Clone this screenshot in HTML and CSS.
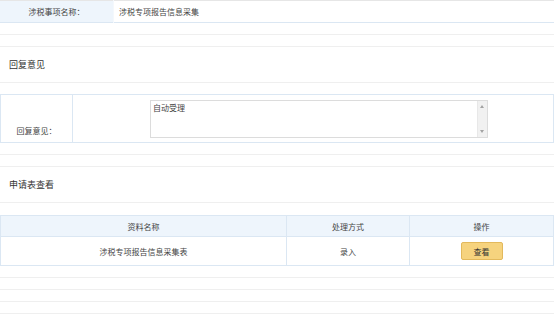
FILE: index.html
```html
<!DOCTYPE html>
<html lang="zh-CN">
<head>
    <meta charset="UTF-8">
    <title>涉税事项</title>
    <link rel="stylesheet" href="styles.css">
</head>
<body>
    <table class="info-table">
        <tr>
            <td class="label">涉税事项名称：</td>
            <td class="value">涉税专项报告信息采集</td>
        </tr>
    </table>
    <div class="gap"></div>
    <div class="gap"></div>
    <div class="section-title">回复意见</div>
    <table class="reply-table">
        <tr>
            <td class="reply-label">回复意见：</td>
            <td class="reply-value">
                <div class="textbox">
                    <div class="textbox-text">自动受理</div>
                    <div class="scrollbar">
                        <span class="arrow-up"></span>
                        <span class="arrow-down"></span>
                    </div>
                </div>
            </td>
        </tr>
    </table>
    <div class="gap"></div>
    <div class="gap"></div>
    <div class="section-title">申请表查看</div>
    <table class="data-table">
        <tr>
            <th class="col-name">资料名称</th>
            <th class="col-mode">处理方式</th>
            <th>操作</th>
        </tr>
        <tr>
            <td>涉税专项报告信息采集表</td>
            <td>录入</td>
            <td><button class="view-btn">查看</button></td>
        </tr>
    </table>
    <div class="gap"></div>
    <div class="gap"></div>
    <div class="gap"></div>
    <div class="gap"></div>
</body>
</html>
```

FILE: styles.css
```css
body {
    margin: 0;
    font-family: "Noto Sans CJK SC", "Liberation Sans", sans-serif;
    font-size: 8px;
    color: #444444;
    background: #ffffff;
}
table {
    width: 100%;
    border-collapse: collapse;
}
td, th {
    padding: 0;
}
.info-table {
    border-top: 1px solid #e6e6e6;
    border-bottom: 1px solid #dbe7f3;
}
.info-table td {
    height: 21px;
}
.info-table .label {
    width: 113px;
    background-color: #eef5fc; /* light blue */
    text-align: center;
    border-right: 1px solid #f4f8fc;
}
.info-table .value {
    padding-left: 5px;
}
.gap {
    height: 11px;
    border-bottom: 1px solid #efefef;
}
.section-title {
    height: 35px;
    line-height: 35px;
    padding-left: 9px;
    font-size: 9px;
    color: #333333;
    border-bottom: 1px solid #efefef;
}
.reply-table {
    margin-top: 11px;
    border: 1px solid #dbe7f3;
}
.reply-table td {
    height: 47px;
    border: 1px solid #dbe7f3;
}
.reply-table .reply-label {
    width: 71px;
    height: 41px;
    text-align: center;
    vertical-align: bottom;
    padding-bottom: 6px;
}
.reply-table .reply-value {
    padding-left: 77px;
}
.textbox {
    width: 336px;
    height: 36px;
    border: 1px solid #dcdcdc;
    display: flex;
    background: #ffffff;
}
.textbox-text {
    flex: 1;
    padding: 1px 2px;
}
.scrollbar {
    width: 9px;
    background-color: #f1f1f1;
    border-left: 1px solid #e8e8e8;
    position: relative;
}
.arrow-up, .arrow-down {
    position: absolute;
    left: 2px;
    width: 0;
    height: 0;
    border-left: 2.5px solid transparent;
    border-right: 2.5px solid transparent;
}
.arrow-up {
    top: 4px;
    border-bottom: 3px solid #a3a3a3;
}
.arrow-down {
    bottom: 4px;
    border-top: 3px solid #a3a3a3;
}
.data-table {
    margin-top: 12px;
    border: 1px solid #dbe7f3;
}
.data-table th {
    height: 20px;
    font-weight: normal;
    background-color: #eef5fc; /* light blue */
    border: 1px solid #dbe7f3;
}
.data-table td {
    height: 28px;
    text-align: center;
    border: 1px solid #dbe7f3;
}
.data-table .col-name {
    width: 285px;
}
.data-table .col-mode {
    width: 122px;
}
.view-btn {
    width: 42px;
    height: 18px;
    padding: 0;
    font-family: inherit;
    font-size: 8px;
    color: #333333;
    background-color: #f6d37e; /* yellow */
    border: 1px solid #e3b95c;
    border-radius: 2px;
    cursor: pointer;
}
```
